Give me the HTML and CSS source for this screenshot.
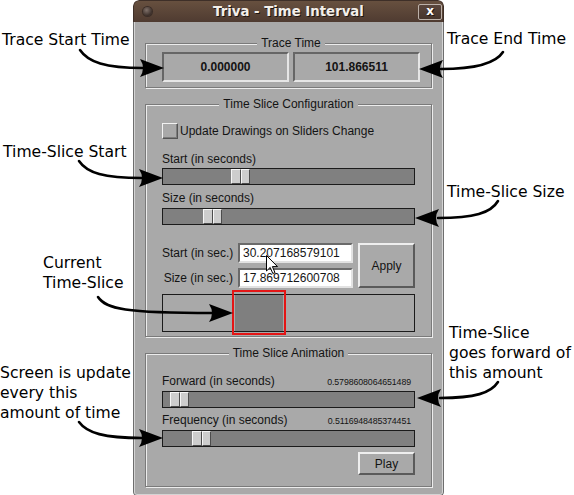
FILE: index.html
```html
<!DOCTYPE html>
<html>
<head>
<meta charset="utf-8">
<title>Triva - Time Interval</title>
<link rel="stylesheet" href="styles.css">
</head>
<body>
<div class="stage">
  <div class="window">
    <div class="titlebar">
      <div class="tb-left"><span class="tb-dot"></span></div>
      <div class="tb-title">Triva - Time Interval</div>
      <div class="tb-right"><span class="tb-close">x</span></div>
    </div>
    <div class="win-body">
      <div class="frame frame-trace">
        <div class="legend">Trace Time</div>
        <div class="trace-row">
          <div class="value-box">0.000000</div>
          <div class="value-box">101.866511</div>
        </div>
      </div>

      <div class="frame frame-config">
        <div class="legend">Time Slice Configuration</div>
        <div class="check-row"><span class="checkbox"></span><span>Update Drawings on Sliders Change</span></div>
        <div class="slider-label lbl-start">Start (in seconds)</div>
        <div class="track"><span class="thumb" style="margin-left:68px"><i></i><i></i></span></div>
        <div class="slider-label lbl-size">Size (in seconds)</div>
        <div class="track track-size"><span class="thumb" style="margin-left:40px"><i></i><i></i></span></div>
        <div class="entry-grid">
          <span class="entry-label">Start (in sec.)</span>
          <span class="entry">30.207168579101</span>
          <button class="btn btn-apply">Apply</button>
          <span class="entry-label">Size (in sec.)</span>
          <span class="entry">17.869712600708</span>
        </div>
        <div class="slice-bar"><span class="slice" style="margin-left:72px;width:48px"></span></div>
      </div>

      <div class="frame frame-anim">
        <div class="legend">Time Slice Animation</div>
        <div class="value-row row-forward"><span>Forward (in seconds)</span><span class="small-val">0.5798608064651489</span></div>
        <div class="track"><span class="thumb" style="margin-left:7px"><i></i><i></i></span></div>
        <div class="value-row row-freq"><span>Frequency (in seconds)</span><span class="small-val">0.5116948485374451</span></div>
        <div class="track"><span class="thumb" style="margin-left:29px"><i></i><i></i></span></div>
        <div class="play-row"><button class="btn btn-play">Play</button></div>
      </div>
    </div>
  </div>

  <div class="highlight"></div>
  <svg class="cursor" width="13" height="20" viewBox="0 0 13 20"><path d="M0.5,0.5 L0.5,16 L4.2,12.4 L6.8,18.5 L9,17.6 L6.4,11.6 L11.5,11.6 Z" fill="#fff" stroke="#000" stroke-width="1" stroke-linejoin="round"/></svg>

  <div class="note n-trace-start">Trace Start Time</div>
  <div class="note n-trace-end">Trace End Time</div>
  <div class="note n-ts-start">Time-Slice Start</div>
  <div class="note n-ts-size">Time-Slice Size</div>
  <div class="note n-current">Current<br>Time-Slice</div>
  <div class="note n-forward">Time-Slice<br>goes forward of<br>this amount</div>
  <div class="note n-screen">Screen is update<br>every this<br>amount of time</div>

  <svg class="arrows" width="574" height="495" viewBox="0 0 574 495">
    <g fill="none" stroke="#000" stroke-width="2.6" stroke-linecap="round">
      <path d="M80,50 C88,62 105,68 143,68"/>
      <path d="M503,52 C496,63 478,69 441,69"/>
      <path d="M79,161 C87,173 104,178 142,178"/>
      <path d="M498,201 C491,213 474,218 438,218"/>
      <path d="M98,297 C106,309 125,313 213,313"/>
      <path d="M498,382 C491,393 475,398 440,398"/>
      <path d="M79,422 C87,433 104,438 142,438"/>
    </g>
    <g fill="#000">
      <path d="M164,68 L140,59 Q146,68 140,77 Z"/>
      <path d="M419,69 L443,60 Q437,69 443,78 Z"/>
      <path d="M163,178 L139,169 Q145,178 139,187 Z"/>
      <path d="M415,218 L439,209 Q433,218 439,227 Z"/>
      <path d="M233,313 L209,304 Q215,313 209,322 Z"/>
      <path d="M417,398 L441,389 Q435,398 441,407 Z"/>
      <path d="M163,438 L139,429 Q145,438 139,447 Z"/>
    </g>
  </svg>
</div>
</body>
</html>
```

FILE: styles.css
```css
* { box-sizing: border-box; }
html, body { margin: 0; padding: 0; background: #fff; }
body {
  font-family: "Liberation Sans", Arial, sans-serif;
  font-size: 12px;
  color: #141414;
}
.stage { position: relative; width: 574px; height: 495px; overflow: hidden; }

/* window */
.window {
  width: 311px;
  margin-left: 133px;
  border-radius: 6px 6px 4px 4px;
  overflow: hidden;
}
.titlebar {
  height: 22px;
  display: grid;
  grid-template-columns: 1fr auto 1fr;
  align-items: center;
  background: linear-gradient(#67503f, #4f3b31);
  border: 1px solid #3e2f28;
  border-bottom: none;
  border-radius: 6px 6px 0 0;
}
.tb-dot {
  display: block;
  width: 9px; height: 9px;
  margin-left: 9px;
  border-radius: 50%;
  background: radial-gradient(circle at 40% 35%, #80716a, #3a2e29 70%);
  box-shadow: 0 0 0 1px #3a2d27;
}
.tb-title {
  font-family: "DejaVu Sans", sans-serif;
  font-weight: bold;
  font-size: 13.3px;
  line-height: 20px;
  color: #f3efea;
  text-shadow: 1px 1px 0 #1e1511;
}
.tb-right { display: flex; justify-content: flex-end; }
.tb-close {
  width: 24px; height: 16px;
  margin-right: 1px;
  border: 1px solid #bcb1a9;
  border-radius: 2px;
  background: linear-gradient(#5a463c, #46352d);
  color: #fff;
  font-family: "DejaVu Sans", sans-serif;
  font-weight: bold;
  font-size: 12px;
  line-height: 13px;
  text-align: center;
  text-shadow: 1px 1px 0 #1e1511;
}
.win-body {
  background: #a9a9a9;
  border: 1px solid #6e6e6e;
  border-top: none;
  border-radius: 0 0 4px 4px;
  padding: 21px 11px 8px;
  box-shadow: inset 1px 0 0 #d4d4d4, inset -1px 0 0 #d4d4d4, inset 0 -1px 0 #d4d4d4;
}

/* frames */
.frame {
  border: 1px solid #7a7a7a;
  box-shadow: inset 1px 1px 0 #ececec, 1px 1px 0 #ececec;
}
.legend {
  display: table;
  margin: -8px auto 0;
  padding: 0 4px;
  background: #a9a9a9;
  line-height: 14px;
}
.frame-trace { padding: 0 11px 5px 16px; }
.trace-row { display: flex; gap: 4px; margin-top: 2px; }
.value-box {
  flex: 1;
  height: 30px;
  border: 2px solid;
  border-color: #666 #e6e6e6 #e6e6e6 #666;
  display: flex;
  align-items: center;
  justify-content: center;
  font-weight: bold;
  font-size: 12px;
}

.frame-config { margin-top: 16px; padding: 0 16px 4px; }
.check-row {
  display: flex;
  align-items: center;
  gap: 2px;
  height: 16px;
  margin-top: 12px;
  line-height: 14px;
}
.checkbox {
  width: 16px; height: 16px;
  border: 1px solid;
  border-color: #f2f2f2 #555 #555 #f2f2f2;
  box-shadow: inset -1px -1px 0 #7c7c7c;
  background: #a9a9a9;
}
.slider-label { line-height: 14px; }
.lbl-start { margin-top: 13px; }
.lbl-size { margin-top: 6px; }
.track {
  height: 17px;
  margin-top: 2px;
  border: 1px solid #1b1b1b;
  background: #808080;
  display: flex;
}
.track-size { margin-top: 3px; }
.thumb { display: flex; width: 19px; height: 15px; }
.thumb i {
  flex: 1;
  border: 1px solid;
  border-color: #f6f6f6 #4c4c4c #4c4c4c #f6f6f6;
  background: #cdcdcd;
}

.entry-grid {
  margin-top: 18px;
  display: grid;
  grid-template-columns: 71px 115px 1fr;
  grid-template-rows: 20px 20px;
  column-gap: 5px;
  row-gap: 5px;
}
.entry-label { text-align: right; line-height: 20px; white-space: nowrap; }
.entry {
  background: #fff;
  border: 2px solid;
  border-color: #6a6a6a #e2e2e2 #e2e2e2 #6a6a6a;
  padding-left: 3px;
  line-height: 16px;
  white-space: nowrap;
  overflow: hidden;
}
.btn {
  font-family: "Liberation Sans", Arial, sans-serif;
  font-size: 12px;
  color: #141414;
  background: #a9a9a9;
  border: 2px solid;
  border-color: #eeeeee #5a5a5a #5a5a5a #eeeeee;
  padding: 0;
}
.btn-apply { grid-column: 3; grid-row: 1 / span 2; }
.slice-bar {
  margin-top: 6px;
  height: 38px;
  border: 1px solid #1b1b1b;
  display: flex;
}
.slice { height: 100%; background: #7f7f7f; }

.frame-anim { margin-top: 16px; padding: 0 16px 11px; }
.value-row {
  display: flex;
  justify-content: space-between;
  align-items: baseline;
  line-height: 14px;
  padding-right: 4px;
}
.row-forward { margin-top: 14px; }
.row-freq { margin-top: 5px; }
.small-val { font-size: 8.8px; letter-spacing: -0.1px; }
.play-row { display: flex; justify-content: flex-end; margin-top: 5px; }
.btn-play { width: 57px; height: 23px; }

/* overlays */
.highlight {
  position: absolute;
  left: 232px; top: 290px;
  width: 54px; height: 45px;
  border: 2px solid #e41515;
}
.cursor { position: absolute; left: 266px; top: 255px; }
.arrows { position: absolute; left: 0; top: 0; pointer-events: none; }
.note {
  position: absolute;
  font-family: "DejaVu Sans", sans-serif;
  font-size: 15.6px;
  line-height: 20px;
  color: #000;
  white-space: nowrap;
}
.n-trace-start { left: 2px; top: 30px; }
.n-trace-end { left: 447px; top: 29px; }
.n-ts-start { left: 3px; top: 142px; }
.n-ts-size { left: 447px; top: 182px; }
.n-current { left: 43px; top: 253px; }
.n-forward { left: 449px; top: 323px; }
.n-screen { left: 0; top: 363px; }
```
